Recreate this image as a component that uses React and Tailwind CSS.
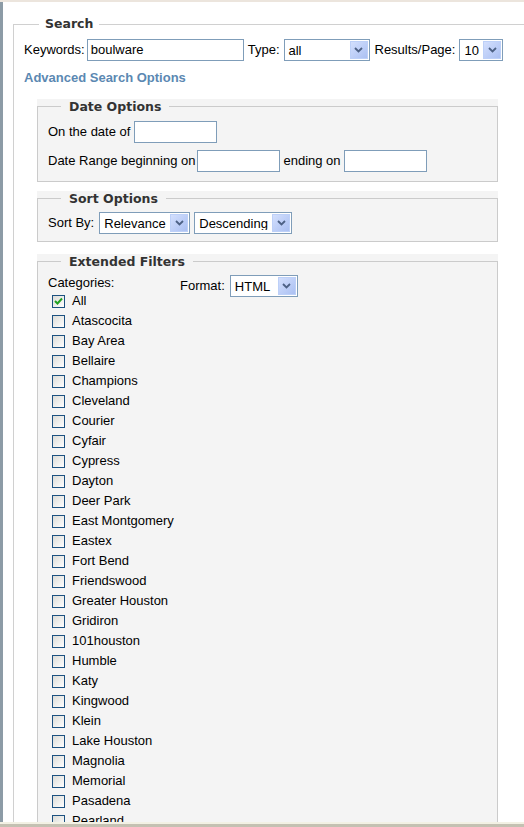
import React from 'react';

const categories = [
  'All', 'Atascocita', 'Bay Area', 'Bellaire', 'Champions', 'Cleveland', 'Courier',
  'Cyfair', 'Cypress', 'Dayton', 'Deer Park', 'East Montgomery', 'Eastex', 'Fort Bend',
  'Friendswood', 'Greater Houston', 'Gridiron', '101houston', 'Humble', 'Katy',
  'Kingwood', 'Klein', 'Lake Houston', 'Magnolia', 'Memorial', 'Pasadena', 'Pearland',
  'Sugar Land', 'Tomball',
];

const TextBox = ({ className, value }) => (
  <div className={`h-[22px] border border-[#7f9db9] bg-white flex items-center pl-[3px] text-[13px] ${className}`}>
    {value}
  </div>
);

const Select = ({ className, value }) => (
  <div className={`h-[22px] border border-[#7f9db9] bg-white flex items-center p-px ${className}`}>
    <span className="flex-1 pl-[3px] text-[13px] leading-none whitespace-nowrap overflow-hidden">{value}</span>
    <span className="w-[18px] h-full border border-[#bdd0f8] bg-gradient-to-br from-[#d3dffd] to-[#abc0f2] flex items-center justify-center">
      <svg width="9" height="6" viewBox="0 0 9 6">
        <path d="M1 1l3.5 3.5L8 1" stroke="#4d6185" strokeWidth="1.8" fill="none" />
      </svg>
    </span>
  </div>
);

const Checkbox = ({ checked }) => (
  <span className="w-[13px] h-[13px] border border-[#1c5180] bg-gradient-to-br from-[#dcdcd7] to-white flex items-center justify-center shrink-0">
    {checked && (
      <svg width="9" height="8" viewBox="0 0 9 8">
        <path d="M1 4l2.5 2.5L8 1.5" stroke="#21a121" strokeWidth="2" fill="none" />
      </svg>
    )}
  </span>
);

const Group = ({ title, className, children }) => (
  <div className={`bg-[#f4f4f4] ml-[13px] w-[461px] ${className}`}>
    <fieldset className="border border-[#cbcbcb] px-[10px]">
      <legend className="ml-[13px] px-[8px] text-[12.5px] leading-[15px] font-bold text-[#333] font-['DejaVu_Sans',Verdana,sans-serif]">
        {title}
      </legend>
      {children}
    </fieldset>
  </div>
);

export default function App() {
  return (
    <div className="h-[827px] flex flex-col overflow-hidden bg-white text-black font-['Liberation_Sans',Arial,sans-serif] text-[13px]">
      <div className="h-[2px] bg-[#ece5dd] shrink-0" />
      <div className="flex-1 min-h-0 flex">
        <div className="w-[3px] bg-[#8c9ba6] shrink-0" />
        <div className="flex-1 min-w-0 overflow-hidden pt-[14px]">
          <fieldset className="ml-[10px] border border-r-0 border-b-0 border-[#d0d0d0] pl-[10px] pt-[7px]">
            <legend className="ml-[15px] px-[6px] text-[12.5px] leading-[16px] font-bold text-[#333] font-['DejaVu_Sans',Verdana,sans-serif]">
              Search
            </legend>
            <div className="flex items-center h-[22px]">
              <span>Keywords:</span>
              <TextBox className="w-[157px] ml-[2px]" value="boulware" />
              <span className="ml-[4px]">Type:</span>
              <Select className="w-[86px] ml-[4px]" value="all" />
              <span className="ml-[5px]">Results/Page:</span>
              <Select className="w-[44px] ml-[4px]" value="10" />
            </div>
            <div className="mt-[9px] leading-[16px] font-bold text-[#5b88b2]">Advanced Search Options</div>

            <Group title="Date Options" className="mt-[13px]">
              <div className="pt-[7px] pb-[9px] flex flex-col gap-[7px]">
                <div className="flex items-center h-[22px]">
                  <span>On the date of</span>
                  <TextBox className="w-[83px] ml-[4px]" />
                </div>
                <div className="flex items-center h-[22px]">
                  <span>Date Range beginning on</span>
                  <TextBox className="w-[83px] ml-[2px]" />
                  <span className="ml-[3px]">ending on</span>
                  <TextBox className="w-[83px] ml-[3px]" />
                </div>
              </div>
            </Group>

            <Group title="Sort Options" className="mt-[9px]">
              <div className="pt-[6px] pb-[7px] flex items-center h-[22px] box-content">
                <span>Sort By:</span>
                <Select className="w-[91px] ml-[5px]" value="Relevance" />
                <Select className="w-[98px] ml-[4px]" value="Descending" />
              </div>
            </Group>

            <Group title="Extended Filters" className="mt-[12px]">
              <div className="pt-[5px] flex items-start">
                <div className="w-[132px] shrink-0">
                  <div className="leading-[17px]">Categories:</div>
                  {categories.map((c, i) => (
                    <div key={c} className="h-[20px] flex items-center pl-[4px] gap-[7px] whitespace-nowrap">
                      <Checkbox checked={i === 0} />
                      <span>{c}</span>
                    </div>
                  ))}
                </div>
                <div className="flex items-center mt-px">
                  <span>Format:</span>
                  <Select className="w-[68px] ml-[5px]" value="HTML" />
                </div>
              </div>
            </Group>
          </fieldset>
        </div>
      </div>
      <div className="h-[5px] shrink-0 border-t-2 border-[#f3f1e4] bg-[#c4c1b2]" />
    </div>
  );
}
